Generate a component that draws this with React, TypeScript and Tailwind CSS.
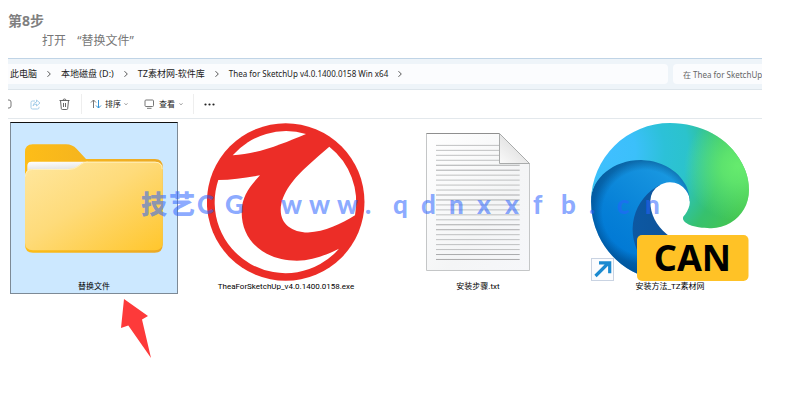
import type { ReactNode } from "react";

const crumbs = [
	{ name: "此电脑", size: "text-[9px]" },
	{ name: "本地磁盘 (D:)", size: "text-[9px]" },
	{ name: "TZ素材网-软件库", size: "text-[9px]" },
	{ name: "Thea for SketchUp v4.0.1400.0158 Win x64", size: "text-[8px]" },
];

const watermark = "技艺CG www.qdnxxfb.cn";

function Chevron() {
	return (
		<svg viewBox="0 0 4 8" className="h-2 w-1 shrink-0" fill="none" stroke="#555" strokeWidth="1">
			<path d="M.5 1.200 3.300 4 .5 6.800" />
		</svg>
	);
}

function ChevronDown() {
	return (
		<svg viewBox="0 0 6 6" className="size-1 shrink-0" fill="none" stroke="#777" strokeWidth="1.2">
			<path d="M.8 2 3 4.2 5.2 2" />
		</svg>
	);
}

function FolderIcon() {
	return (
		<svg viewBox="0 0 158 158" className="w-[158px]">
			<defs>
				<linearGradient id="folder-front" x1="0" y1="0" x2="1" y2="1">
					<stop offset="0" stopColor="#ffe79f" />
					<stop offset="0.45" stopColor="#fedb7a" />
					<stop offset="1" stopColor="#ffc62c" />
				</linearGradient>
				<linearGradient id="folder-back" x1="0" y1="0" x2="1" y2="0">
					<stop offset="0" stopColor="#fdbd18" />
					<stop offset="1" stopColor="#eba926" />
				</linearGradient>
				<linearGradient id="folder-paper" x1="0" y1="0" x2="0.2" y2="1">
					<stop offset="0" stopColor="#fff" />
					<stop offset="1" stopColor="#dcdcdc" />
				</linearGradient>
			</defs>
			<path
				d="M10 29q0-7.7 7.7-7.7H51q6.500 0 10.500 4.500L71 36h69q7.700 0 7.700 8v77.500q0 8.200-8 8.200H18q-8 0-8-8z"
				fill="url(#folder-back)"
			/>
			<path d="M12.300 50v-7q0-4.300 4.300-4.300H73L60 46z" fill="url(#folder-paper)" />
			<path
				d="M10 53.500q0-7.500 7.500-7.500H53q6 0 10-3l3-2.300q2.700-2 6-2h68q7.700 0 7.700 7.500V120q0 7.300-8 7.300H18q-8 0-8-7.300z"
				fill="url(#folder-front)"
			/>
			<path d="M10.500 53.500q0-7 7-7H53q6 0 10-3l3-2.300q2.700-2 6-2h68q7.200 0 7.200 7" fill="none" stroke="#fff0bd" strokeWidth="1" />
		</svg>
	);
}

function TheaIcon() {
	return (
		<svg viewBox="0 0 158 158" className="w-[158px]">
			<circle cx="78.700" cy="79" r="78.800" fill="#ec2d27" />
			<g fill="#fff">
				<path d="M25.700 32.300A70.800 70.800 0 0 1 99 11C75 21 51 31 25.700 32.300z" />
				<path d="M122.300 23.700A70.800 70.800 0 0 1 148 92.300C134 101 118 108.800 101 109.500C85 109.500 73.700 101 73.700 87C74 70 88 54 101 42.500C108 36 115 30 122.300 23.700z" />
				<path d="M11.300 57C25 57 39 55 53 52.300C42 64 35 74 34.700 88C34 120 60 137.700 90 137.700C105 137.500 119 132 132 125.700A70.800 70.800 0 0 1 11.300 57z" />
			</g>
		</svg>
	);
}

function TextFileIcon() {
	return (
		<svg viewBox="0 0 158 158" className="w-[158px]">
			<defs>
				<linearGradient id="txt-page" x1="0" y1="0" x2="1" y2="1">
					<stop offset="0" stopColor="#fff" />
					<stop offset="0.600" stopColor="#f4f5f6" />
					<stop offset="1" stopColor="#f6f7fa" />
				</linearGradient>
				<linearGradient id="txt-fold" x1="0" y1="1" x2="0.700" y2="0.200">
					<stop offset="0" stopColor="#fafafa" />
					<stop offset="1" stopColor="#dcdcdc" />
				</linearGradient>
			</defs>
			<path d="M27.500 10.500h73l30 30v107h-103z" fill="url(#txt-page)" stroke="#c4c6c7" />
			<path d="M27.500 10.500h73" stroke="#8f8f8f" />
			{Array.from({ length: 24 }, (_, i) => (
				<path
					key={i}
					d={`M37 ${22.4 + i * 4.96}H${i < 4 ? 100 : 120.7}`}
					stroke={i % 6 > 3 ? "#a3a4a5" : "#b9babb"}
					strokeWidth="0.900"
				/>
			))}
			<path d="M100.500 10.500v30h30z" fill="url(#txt-fold)" stroke="#a9abab" />
		</svg>
	);
}

function EdgeIcon() {
	return (
		<svg viewBox="0 0 158 158" className="w-[158px]">
			<defs>
				<linearGradient id="edge-dark" x1="0" y1="0" x2="1" y2="0">
					<stop offset="0" stopColor="#0c59a4" />
					<stop offset="1" stopColor="#114a8b" />
				</linearGradient>
				<linearGradient id="edge-blue" gradientUnits="userSpaceOnUse" x1="150" y1="85" x2="46" y2="220">
					<stop offset="0" stopColor="#1b9de2" />
					<stop offset="0.200" stopColor="#1592de" />
					<stop offset="0.670" stopColor="#0680d7" />
					<stop offset="1" stopColor="#0078d4" />
				</linearGradient>
				<radialGradient id="edge-shade" gradientUnits="userSpaceOnUse" cx="92" cy="150" r="98">
					<stop offset="0.700" stopColor="#003a70" stopOpacity="0" />
					<stop offset="0.860" stopColor="#003a70" stopOpacity="0.450" />
					<stop offset="1" stopColor="#003a70" stopOpacity="0.600" />
				</radialGradient>
				<radialGradient id="edge-teal" gradientUnits="userSpaceOnUse" cx="30" cy="50" r="235">
					<stop offset="0" stopColor="#40bfff" />
					<stop offset="0.200" stopColor="#3bc0fa" />
					<stop offset="0.400" stopColor="#2cc1d8" />
					<stop offset="0.560" stopColor="#2bc3cc" />
					<stop offset="0.800" stopColor="#36c16e" />
					<stop offset="1" stopColor="#43c552" />
				</radialGradient>
				<radialGradient id="edge-green" gradientUnits="userSpaceOnUse" cx="243" cy="75" r="88">
					<stop offset="0" stopColor="#66eb6e" />
					<stop offset="0.300" stopColor="#66eb6e" stopOpacity="0.800" />
					<stop offset="1" stopColor="#66eb6e" stopOpacity="0" />
				</radialGradient>
			</defs>
			<g transform="scale(.617) translate(-4.630 -4.920)">
				<path
					d="M235.680 195.460a93.730 93.730 0 0 1-10.540 4.710 101.870 101.870 0 0 1-35.900 6.460c-47.320 0-88.540-32.550-88.540-74.320A31.480 31.480 0 0 1 117.130 105c-42.800 1.800-53.800 46.400-53.800 72.530 0 73.880 68.090 81.370 82.760 81.370 7.910 0 19.840-2.300 27-4.560l1.310-.440a128.340 128.340 0 0 0 66.600-52.800 4 4 0 0 0-5.320-5.640z"
					fill="url(#edge-dark)"
				/>
				{["url(#edge-blue)", "url(#edge-shade)"].map((fill) => (
					<path
						key={fill}
						d="M110.340 246.340A79.200 79.200 0 0 1 87.600 225a80.720 80.720 0 0 1 29.530-120c3.120-1.470 8.450-4.130 15.540-4a32.350 32.350 0 0 1 25.690 13 31.880 31.880 0 0 1 6.360 18.660c0-.210 24.460-79.600-80-79.600-43.900 0-80 41.660-80 78.210a130.150 130.150 0 0 0 12.110 56 128 128 0 0 0 156.380 67.110 75.550 75.550 0 0 1-62.780-8z"
						fill={fill}
					/>
				))}
				{["url(#edge-teal)", "url(#edge-green)"].map((fill) => (
					<path
						key={fill}
						d="M156.940 153.780c-.810 1.050-3.300 2.500-3.300 5.660 0 2.610 1.700 5.120 4.720 7.230 14.380 10 41.490 8.680 41.560 8.680a59.560 59.560 0 0 0 30.270-8.350 61.380 61.380 0 0 0 30.430-52.880c.260-22.410-8-37.310-11.340-43.910C228.090 28.760 182.350 4.920 132.610 4.920a128 128 0 0 0-128 126.200c.480-36.540 36.800-66.050 80-66.050 3.500 0 23.460.340 42 10.070 16.340 8.580 24.900 18.940 30.850 29.210 6.180 10.670 7.280 24.150 7.280 29.520s-2.740 13.330-7.800 19.900z"
						fill={fill}
					/>
				))}
			</g>
			<rect x="46" y="112" width="111.500" height="46" rx="5" fill="#ffc226" />
			<text x="101.500" y="148" textAnchor="middle" fontSize="36" fontWeight="700" fontFamily="Noto Sans, sans-serif">
				CAN
			</text>
			<rect x="0.500" y="135.500" width="22" height="22" fill="#fbfcfe" stroke="#c9d3e2" />
			<path d="M4.500 153 16.500 141M8 139.800h10.700v10.500" fill="none" stroke="#1b8ad0" strokeWidth="3.200" />
		</svg>
	);
}

function FileItem({ name, selected, children }: { name: string; selected?: boolean; children: ReactNode }) {
	return (
		<li>
			<button
				type="button"
				className={
					selected
						? "flex w-full flex-col items-center border border-[#7d8a96] border-t-[#111] bg-[#cce8ff] pb-px"
						: "flex w-full flex-col items-center border border-transparent pb-px"
				}
			>
				{children}
				<span className="font-['Roboto','Noto_Sans_CJK_SC',sans-serif] text-[8px] leading-[11px] text-black">{name}</span>
			</button>
		</li>
	);
}

export default function App() {
	return (
		<div className="relative bg-white pt-3 pr-[33px] pl-2 font-['Noto_Sans','Noto_Sans_CJK_SC',sans-serif]">
			<h1 className="text-[14px] leading-[18px] font-bold text-[#808080]">第8步</h1>
			<p className="pl-[34px] text-[12px] leading-[22px] text-[#777]">
				打开 <span className="pl-2">“替换文件”</span>
			</p>

			<section className="mt-1.5 overflow-hidden border-t border-[#c0d4e6]">
				<div className="flex gap-[5px] border-b border-[#dde5eb] bg-[#eef4f9] py-[5px]">
					<nav className="flex h-5 flex-1 items-center gap-2.5 rounded-r bg-[#fbfcfe] pl-0.5 text-[#222]">
						{crumbs.map((crumb) => (
							<span key={crumb.name} className="flex items-center gap-2.5">
								<a href="#" className={`${crumb.size} leading-5 whitespace-nowrap`}>
									{crumb.name}
								</a>
								<Chevron />
							</span>
						))}
					</nav>
					<input
						type="text"
						aria-label="搜索"
						placeholder="在 Thea for SketchUp"
						className="h-5 w-[89px] rounded-l bg-[#fbfcfe] pl-2.5 text-[8px] placeholder:text-[#666]"
					/>
				</div>

				<div className="flex h-[29px] items-center border-b border-[#e3e8ec] text-[8px] text-[#222]">
					<button type="button" aria-label="重命名" className="w-[22px]">
						<svg viewBox="0 0 4 10" className="h-2.5 w-1" fill="none" stroke="#777">
							<path d="M0 1h1q2 0 2 2v4q0 2-2 2H0" />
						</svg>
					</button>
					<button type="button" aria-label="共享" className="w-[29px]">
						<svg viewBox="0 0 11 11" className="size-[11px]" fill="none" stroke="#a4cde9">
							<path d="M5 2H2.500Q1 2 1 3.500v5Q1 10 2.500 10h5Q9 10 9 8.500V7.800" />
							<path d="M6.500 1v2Q3.500 3.500 3 7q1.500-2 3.500-2v2l3.500-3z" />
						</svg>
					</button>
					<button type="button" aria-label="删除" className="w-[22px]">
						<svg viewBox="0 0 11 12" className="h-3 w-[11px]" fill="none" stroke="#555">
							<path d="M.5 2.500h10M4 2.500q0-1.500 1.500-1.500T7 2.500M1.500 2.500l.8 8q.1 1 1 1h4.400q.9 0 1-1l.8-8M4.500 5v4M6.500 5v4" strokeWidth=".9" />
						</svg>
					</button>
					<span className="h-5 w-px bg-[#eee]" />
					<button type="button" className="flex items-center gap-[3px] pl-2">
						<svg viewBox="0 0 12 10" className="h-2.5 w-3" fill="none">
							<path d="M3.500 9V1M1 3.500 3.500 1 6 3.500" stroke="#777" />
							<path d="M8.500 1v8M6 6.500 8.500 9 11 6.500" stroke="#3494d6" />
						</svg>
						排序
						<ChevronDown />
					</button>
					<button type="button" className="ml-4 flex items-center gap-1">
						<svg viewBox="0 0 11 10" className="h-2.5 w-[11px]" fill="none" stroke="#777">
							<rect x="1" y="1" width="8.500" height="6.500" rx="1" />
							<path d="M3 9.300h4.500" />
						</svg>
						查看
						<ChevronDown />
					</button>
					<span className="ml-2.5 h-5 w-px bg-[#eee]" />
					<button type="button" aria-label="更多" className="ml-2.5">
						<svg viewBox="0 0 11 3" className="h-[3px] w-[11px]" fill="#222">
							<circle cx="1.500" cy="1.500" r="1.100" />
							<circle cx="5.500" cy="1.500" r="1.100" />
							<circle cx="9.500" cy="1.500" r="1.100" />
						</svg>
					</button>
				</div>

				<ul className="grid grid-cols-4 gap-6 pt-[3px] pr-2 pl-0.5">
					<FileItem name="替换文件" selected>
						<FolderIcon />
					</FileItem>
					<FileItem name="TheaForSketchUp_v4.0.1400.0158.exe">
						<TheaIcon />
					</FileItem>
					<FileItem name="安装步骤.txt">
						<TextFileIcon />
					</FileItem>
					<FileItem name="安装方法_TZ素材网">
						<EdgeIcon />
					</FileItem>
				</ul>
			</section>

			<svg viewBox="0 0 30 60" className="mt-[5px] ml-[113px] h-[60px] w-[30px]" fill="#fd3a3a">
				<path d="M3 0 27 17 21 20.500 30 59 7.300 26.500 0 29z" />
			</svg>

			<div className="pointer-events-none absolute top-[188px] left-[141px] flex font-['Lato','Noto_Sans_CJK_SC',sans-serif] text-[26px] leading-8 font-black text-[#2962ff]/55">
				{watermark.split("").map((char, i) => (
					<span key={i} className="w-7">
						{char}
					</span>
				))}
			</div>
		</div>
	);
}
